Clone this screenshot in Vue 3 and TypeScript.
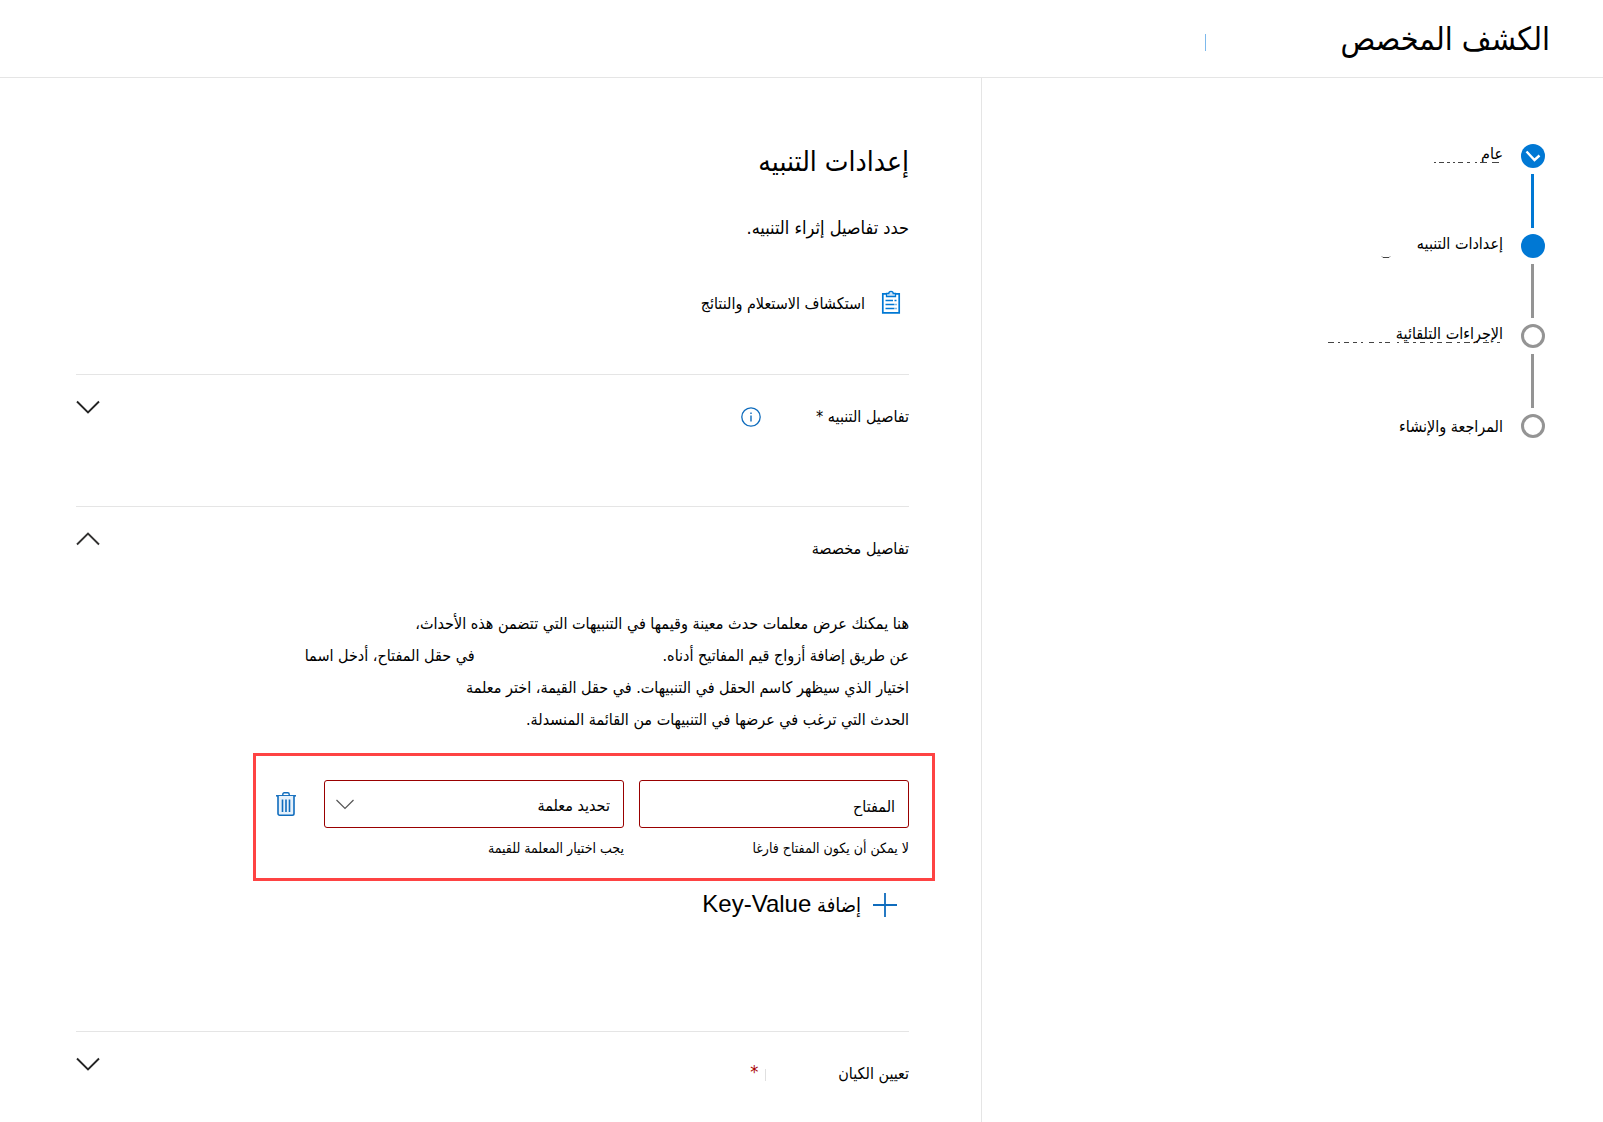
<script setup lang="ts">
import { ref } from 'vue'

type StepState = 'done' | 'current' | 'todo'
interface Step {
  label: string
  state: StepState
  trace?: { width: number; dashes: string }
}

const steps: Step[] = [
  { label: 'عام', state: 'done', trace: { width: 68, dashes: 'M1 5h2M6 5h5M14 5h3M20 5h2M25 5h5M34 5h3M42 5h2M47 5h7M59 5h7' } },
  { label: 'إعدادات التنبيه', state: 'current', trace: { width: 120, dashes: 'M1 9l1 1h6l1 -1' } },
  { label: 'الإجراءات التلقائية', state: 'todo', trace: { width: 174, dashes: 'M1 5h6M11 5h2M17 5h5M26 5h4M34 5h2M42 5h5M52 5h3M58 5h5M70 5h2M77 5h5M86 5h3M93 5h5M103 5h3M110 5h5M119 5h6M130 5h3M137 5h6M148 5h3M156 5h6M170 5h3' } },
  { label: 'المراجعة والإنشاء', state: 'todo' },
]

const keyName = ref('المفتاح')
const parameter = ref('')
</script>

<template>
  <div class="page" dir="rtl" lang="ar">
    <header class="top">
      <h1>الكشف المخصص</h1>
      <span class="top-mark" aria-hidden="true"></span>
    </header>

    <div class="body">
      <nav class="side" aria-label="الخطوات">
        <ol class="steps">
          <li v-for="s in steps" :key="s.label" class="step" :class="s.state">
            <span class="dot">
              <svg v-if="s.state === 'done'" width="24" height="24" viewBox="0 0 24 24" fill="none" stroke="#fff" stroke-width="2.4">
                <path d="M5.500 7.500L13.500 16L18.500 11.500" />
              </svg>
            </span>
            <a href="#" class="step-label">{{ s.label }}</a>
            <svg v-if="s.trace" class="trace" :width="s.trace.width" height="14" fill="none" stroke="#444" stroke-width="1" aria-hidden="true">
              <path :d="s.trace.dashes" transform="translate(0 .5)" />
            </svg>
          </li>
        </ol>
      </nav>

      <main class="main">
        <h2>إعدادات التنبيه</h2>
        <p class="sub">حدد تفاصيل إثراء التنبيه.</p>
        <button type="button" class="explore">
          <svg width="20" height="24" viewBox="0 0 20 24" fill="none" stroke="#0078d4">
            <path d="M1.800 3.800h16.400v19H1.800z" stroke-width="1.700" />
            <path d="M5.500 3.500V6.500h9V3.500h-2.300a2.200 2.200 0 0 0-4.400 0z" fill="#cfe4f7" stroke-width="1.300" />
            <path d="M4.500 10.500h7.500M13.500 10.500h2M4.500 14.500h9M14.500 14.500h1M4.500 18.500h9M14.500 18.500h1" stroke-width="1.300" />
          </svg>
          <span>استكشاف الاستعلام والنتائج</span>
        </button>

        <section class="group alert-group">
          <div class="group-head">
            <h3>تفاصيل التنبيه *</h3>
            <button type="button" class="info" aria-label="معلومات">
              <svg width="20" height="20" viewBox="0 0 20 20" fill="none" stroke="#0f6cbd">
                <circle cx="10" cy="10" r="9.200" stroke-width="1.300" />
                <path d="M10 8.500v6M10 5.500v1.500" stroke-width="1.400" />
              </svg>
            </button>
            <button type="button" class="toggle" aria-label="توسيع" aria-expanded="false">
              <svg width="24" height="14" viewBox="0 0 24 14" fill="none" stroke="#242424" stroke-width="1.900"><path d="M1 1.500L12 12.500L23 1.500" /></svg>
            </button>
          </div>
        </section>

        <section class="group custom-group">
          <div class="group-head">
            <h3>تفاصيل مخصصة</h3>
            <button type="button" class="toggle" aria-label="طي" aria-expanded="true">
              <svg width="24" height="14" viewBox="0 0 24 14" fill="none" stroke="#323130" stroke-width="1.900"><path d="M1 12.500L12 1.500L23 12.500" /></svg>
            </button>
          </div>

          <div class="text">
            <p>هنا يمكنك عرض معلمات حدث معينة وقيمها في التنبيهات التي تتضمن هذه الأحداث،</p>
            <p class="split"><span>عن طريق إضافة أزواج قيم المفاتيح أدناه.</span><span>في حقل المفتاح، أدخل اسما</span></p>
            <p>اختيار الذي سيظهر كاسم الحقل في التنبيهات. في حقل القيمة، اختر معلمة</p>
            <p>الحدث التي ترغب في عرضها في التنبيهات من القائمة المنسدلة.</p>
          </div>

          <div class="pair">
            <div class="field key">
              <input v-model="keyName" type="text" aria-label="المفتاح" aria-describedby="key-error" />
              <p id="key-error" class="error">لا يمكن أن يكون المفتاح فارغا</p>
            </div>
            <div class="field value">
              <div class="select-wrap">
                <select v-model="parameter" aria-label="تحديد معلمة" aria-describedby="value-error">
                  <option value="">تحديد معلمة</option>
                </select>
                <svg class="caret" width="18" height="11" viewBox="0 0 18 11" fill="none" stroke="#555" stroke-width="1.200"><path d="M.5 1L9 9.500L17.500 1" /></svg>
              </div>
              <p id="value-error" class="error">يجب اختيار المعلمة للقيمة</p>
            </div>
            <button type="button" class="delete" aria-label="حذف">
              <svg width="20" height="24" viewBox="0 0 20 24" fill="none" stroke="#0f6cbd">
                <path d="M0 3.800h20" stroke-width="1.500" />
                <path d="M6.800 3.500V2.200a1.400 1.400 0 0 1 1.400-1.400h3.600a1.400 1.400 0 0 1 1.400 1.400v1.300" stroke-width="1.400" />
                <path d="M2 4v17.500a1.700 1.700 0 0 0 1.700 1.700h12.600a1.700 1.700 0 0 0 1.700-1.700V4" fill="#e6f1fb" stroke-width="1.600" />
                <path d="M6.500 7.500v12.500M10 7.500v12.500M13.500 7.500v12.500" stroke-width="1.600" />
              </svg>
            </button>
          </div>

          <button type="button" class="add">
            <svg width="24" height="24" viewBox="0 0 24 24" stroke="#0f6cbd" stroke-width="1.800"><path d="M0 12h24M12 0v24" /></svg>
            <span>إضافة <span class="latin" dir="ltr">Key-Value</span></span>
          </button>
        </section>

        <section class="group">
          <div class="group-head">
            <h3>تعيين الكيان</h3>
            <span class="required">*</span>
            <button type="button" class="toggle" aria-label="توسيع" aria-expanded="false">
              <svg width="24" height="14" viewBox="0 0 24 14" fill="none" stroke="#242424" stroke-width="1.900"><path d="M1 1.500L12 12.500L23 1.500" /></svg>
            </button>
          </div>
        </section>
      </main>
    </div>
  </div>
</template>

<style>
body {
  margin: 0;
  background: #fff;
}
</style>

<style scoped>
* {
  box-sizing: border-box;
}
.page {
  min-height: 100vh;
  display: flex;
  flex-direction: column;
  background: #fff;
  color: #000;
  font-family: 'DejaVu Sans Condensed', 'DejaVu Sans', sans-serif;
  font-size: 16px;
  line-height: 24px;
}
h1, h2, h3, p, ol {
  margin: 0;
  padding: 0;
  font-weight: 400;
}
button {
  padding: 0;
  border: 0;
  background: none;
  color: inherit;
  font: inherit;
  cursor: pointer;
}
svg {
  display: block;
}
.top {
  display: flex;
  align-items: center;
  gap: 134px;
  height: 78px;
  padding: 0 53px;
  border-bottom: 1px solid #e5e5e5;
}
h1 {
  font-size: 32px;
  line-height: 48px;
}
.top-mark {
  width: 1px;
  height: 17px;
  margin-top: 8px;
  background: #7db9ec;
}
.body {
  flex: 1;
  display: flex;
}
.side {
  flex: 0 0 38.8%;
  padding: 66px 58px 0;
  border-left: 1px solid #e5e5e5;
}
.steps {
  list-style: none;
}
.step {
  position: relative;
  display: flex;
  align-items: flex-start;
  gap: 18px;
  height: 90px;
}
.step:not(:last-child)::after {
  content: '';
  position: absolute;
  top: 30px;
  right: 11px;
  width: 3px;
  height: 54px;
  background: #949494;
}
.step.done::after {
  background: #0078d4;
}
.dot {
  width: 24px;
  height: 24px;
  border: 3px solid #949494;
  border-radius: 50%;
}
.done .dot,
.current .dot {
  border: 0;
  background: #0078d4;
}
.step-label {
  color: inherit;
  line-height: 20px;
  text-decoration: none;
}
.step:last-child .step-label {
  line-height: 26px;
}
.trace {
  position: absolute;
  top: 13px;
  right: 44px;
}
.main {
  flex: 1;
  min-width: 0;
  padding: 62px 72px 0 76px;
}
h2 {
  font-size: 28px;
  line-height: 44px;
}
h3 {
  font-size: 16px;
}
.sub {
  margin-top: 32px;
  font-size: 18px;
}
.explore {
  display: flex;
  align-items: flex-start;
  gap: 16px;
  margin-top: 50px;
  padding-right: 8px;
  font-size: 16px;
  line-height: 28px;
}
.group {
  border-top: 1px solid #e5e5e5;
}
.alert-group {
  height: 132px;
  margin-top: 56px;
}
.group-head {
  display: flex;
  align-items: flex-start;
  padding-top: 30px;
}
.info {
  margin: 2px 55px 0 0;
}
.toggle {
  margin: -5px auto 0 0;
}
.text {
  padding-top: 47px;
  line-height: 32px;
}
.split {
  display: flex;
  gap: 188px;
  white-space: nowrap;
}
.pair {
  display: flex;
  align-items: flex-start;
  width: 81.9%;
  margin: 17px -26px 0 0;
  padding: 24px 23px 18px 20px;
  border: 3px solid #fe4343;
}
.key {
  flex: 270 1 0;
}
.value {
  flex: 300 1 0;
  margin-right: 15px;
}
.field {
  min-width: 0;
}
input,
select {
  display: block;
  width: 100%;
  height: 48px;
  padding: 4px 13px 0;
  border: 1px solid #990000;
  border-radius: 3px;
  background: #fff;
  color: #000;
  font: inherit;
  appearance: none;
}
.select-wrap {
  position: relative;
}
.caret {
  position: absolute;
  top: 19px;
  left: 12px;
  pointer-events: none;
}
.error {
  margin-top: 8px;
  font-size: 14px;
}
.delete {
  margin: 12px 28px 0 0;
}
.add {
  display: flex;
  align-items: center;
  gap: 12px;
  margin: 7px 12px 110px 0;
  font-size: 20px;
  line-height: 32px;
}
.latin {
  font-family: 'Liberation Sans', Arial, sans-serif;
  font-size: 24px;
}
.required {
  position: relative;
  margin-right: 80px;
  color: #a80000;
  font-size: 18px;
  line-height: 20px;
}
.required::before {
  content: '';
  position: absolute;
  top: 7px;
  right: -8px;
  width: 1px;
  height: 12px;
  background: #e0e0e0;
}
</style>
